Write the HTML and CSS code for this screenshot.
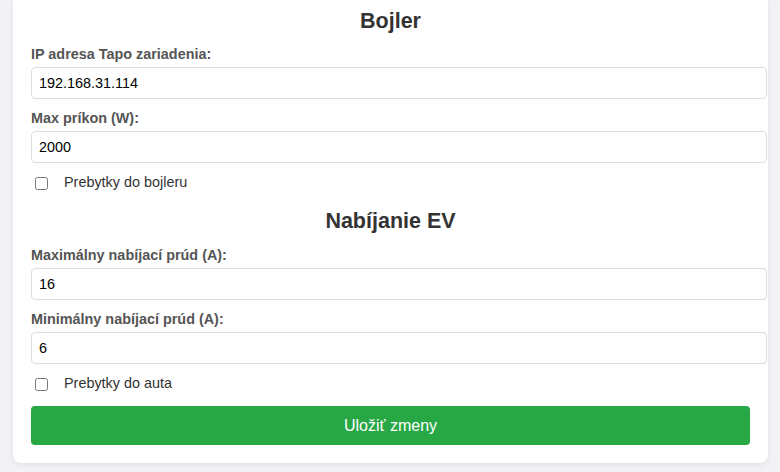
FILE: index.html
```html
<!DOCTYPE html>
<html lang="sk">
<head>
<meta charset="utf-8">
<title>Nastavenia</title>
<link rel="stylesheet" href="styles.css">
</head>
<body>
<div class="card">
  <section class="section">
    <h2 class="title">Bojler</h2>
    <label class="field-label" for="ip">IP adresa Tapo zariadenia:</label>
    <input class="field-input" id="ip" type="text" value="192.168.31.114">
    <label class="field-label" for="power">Max príkon (W):</label>
    <input class="field-input" id="power" type="text" value="2000">
    <label class="check-row"><input class="check" type="checkbox"><span>Prebytky do bojleru</span></label>
  </section>
  <section class="section section-ev">
    <h2 class="title">Nabíjanie EV</h2>
    <label class="field-label" for="maxa">Maximálny nabíjací prúd (A):</label>
    <input class="field-input" id="maxa" type="text" value="16">
    <label class="field-label" for="mina">Minimálny nabíjací prúd (A):</label>
    <input class="field-input" id="mina" type="text" value="6">
    <label class="check-row"><input class="check" type="checkbox"><span>Prebytky do auta</span></label>
  </section>
  <button class="save" type="button">Uložiť zmeny</button>
</div>
</body>
</html>
```

FILE: styles.css
```css
html, body {
  margin: 0;
  padding: 0;
}
body {
  background: #f2f2f7;
  font-family: "Liberation Sans", Arial, sans-serif;
  padding: 0 12px 9px 13px;
  overflow: hidden;
}
.card {
  background: #fff;
  border-radius: 0 0 8px 8px;
  box-shadow: 0 2px 6px rgba(0, 0, 0, 0.08);
  padding: 7px 18px 18px;
}
.section {
  display: block;
}
.section-ev {
  margin-top: 16px;
}
.title {
  margin: 0 0 10px;
  font-size: 21.5px;
  line-height: 28px;
  font-weight: bold;
  color: #333;
  text-align: center;
}
.section-ev .title {
  margin-bottom: 11px;
}
.field-label {
  display: block;
  font-size: 14.4px;
  line-height: 18px;
  font-weight: bold;
  color: #555;
  margin-bottom: 4px;
}
.field-input {
  display: block;
  width: 100%;
  box-sizing: content-box;
  padding: 6px 8px 6px 7px;
  margin: 0 0 10px;
  border: 1px solid #ddd;
  border-radius: 4px;
  font-family: "Liberation Sans", Arial, sans-serif;
  font-size: 14.4px;
  line-height: 18px;
  height: 18px;
  color: #000;
  background: #fff;
}
.check-row {
  display: flex;
  align-items: center;
  height: 18px;
  font-size: 14.4px;
  color: #333;
}
.check {
  width: 13px;
  height: 13px;
  margin: 2px 16px 0 4px;
}
.save {
  display: block;
  width: 100%;
  margin-top: 14px;
  padding: 10px;
  border: none;
  border-radius: 4px;
  background: #28a745;
  color: #fff;
  font-family: "Liberation Sans", Arial, sans-serif;
  font-size: 16px;
  line-height: 19px;
}
```
